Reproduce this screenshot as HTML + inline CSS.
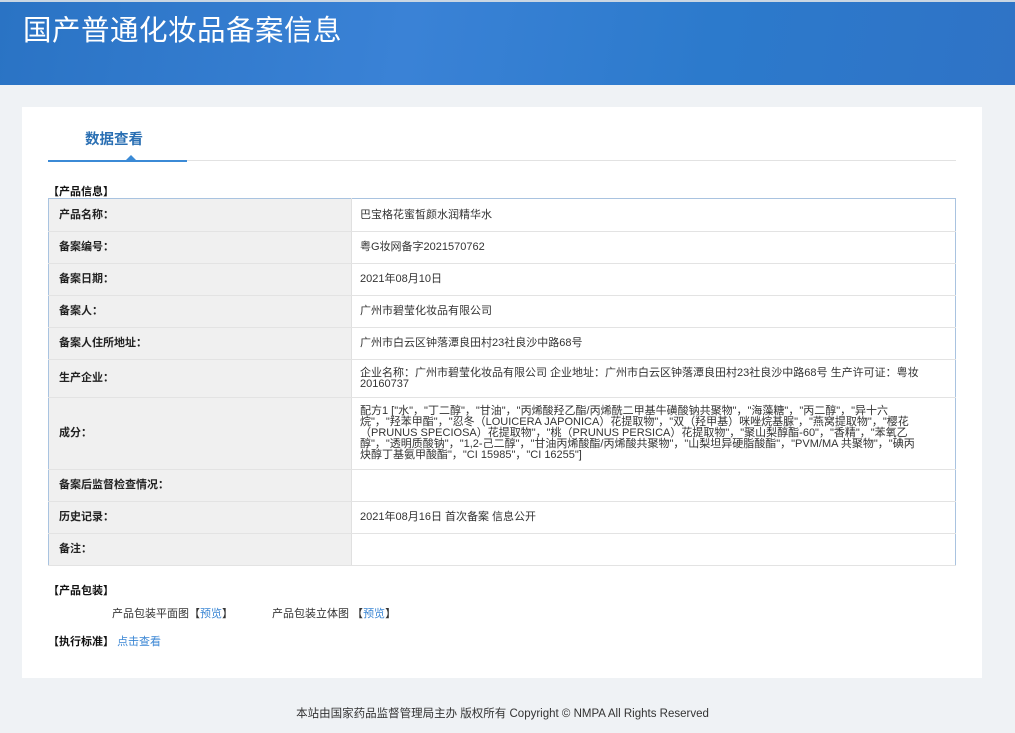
<!DOCTYPE html>
<html><head><meta charset="utf-8"><style>
*{margin:0;padding:0;box-sizing:border-box}
body{width:1015px;height:733px;background:#eff2f5;font-family:"Liberation Sans","Noto Sans CJK SC",sans-serif;font-size:11px;color:#333;position:relative;overflow:hidden}
.hd{position:absolute;left:0;top:0;width:1015px;height:85px;background:linear-gradient(100deg,#2a73c4 0%,#3a82d6 40%,#2c7acc 70%,#2f73c6 100%);border-top:2px solid #c9d6e3}
.hd h1{position:absolute;left:23px;top:6px;font-size:28.5px;font-weight:normal;color:#fff;letter-spacing:0.5px;font-family:"Noto Sans CJK SC",sans-serif}
.card{position:absolute;left:22px;top:107px;width:960px;height:571px;background:#fff}
.tab{position:absolute;left:63px;top:21px;font-size:14.5px;font-weight:bold;color:#2a6fb3}
.line{position:absolute;left:26px;top:53px;width:908px;height:1px;background:#e2e2e2}
.blue{position:absolute;left:26px;top:53px;width:139px;height:2px;background:#3b8ad6}
.tri{position:absolute;left:104px;top:48px;width:0;height:0;border-left:5px solid transparent;border-right:5px solid transparent;border-bottom:5px solid #3b8ad6}
.sec{position:absolute;font-weight:bold;color:#111}
table{position:absolute;left:26px;top:91px;width:908px;border-collapse:collapse;border:1px solid #a9c3e0}
td{border-bottom:1px solid #e3e3e3;vertical-align:middle;line-height:11px}
td.l{width:303px;background:#f0f0f0;font-weight:bold;padding-left:10px;border-right:1px solid #e0e0e0;color:#222}
td.r{padding-left:8px;padding-right:36px}
a{color:#3a86d4;text-decoration:none}
.ft{position:absolute;top:705px;left:0;width:1005px;text-align:center;color:#333;font-size:11.5px}
</style></head><body>
<div class="hd"><h1>国产普通化妆品备案信息</h1></div>
<div class="card">
<div class="tab">数据查看</div>
<div class="line"></div><div class="blue"></div><div class="tri"></div>
<div class="sec" style="left:26px;top:76px">【产品信息】</div>
<table>
<tr style="height:33px"><td class="l">产品名称：</td><td class="r">巴宝格花蜜皙颜水润精华水</td></tr>
<tr style="height:32px"><td class="l">备案编号：</td><td class="r">粤G妆网备字2021570762</td></tr>
<tr style="height:32px"><td class="l">备案日期：</td><td class="r">2021年08月10日</td></tr>
<tr style="height:32px"><td class="l">备案人：</td><td class="r">广州市碧莹化妆品有限公司</td></tr>
<tr style="height:32px"><td class="l">备案人住所地址：</td><td class="r">广州市白云区钟落潭良田村23社良沙中路68号</td></tr>
<tr style="height:38px"><td class="l">生产企业：</td><td class="r">企业名称：广州市碧莹化妆品有限公司 企业地址：广州市白云区钟落潭良田村23社良沙中路68号 生产许可证：粤妆20160737</td></tr>
<tr style="height:72px"><td class="l">成分：</td><td class="r">配方1 ["水"，"丁二醇"，"甘油"，"丙烯酸羟乙酯/丙烯酰二甲基牛磺酸钠共聚物"，"海藻糖"，"丙二醇"，"异十六烷"，"羟苯甲酯"，"忍冬（LOUICERA JAPONICA）花提取物"，"双（羟甲基）咪唑烷基脲"，"燕窝提取物"，"樱花（PRUNUS SPECIOSA）花提取物"，"桃（PRUNUS PERSICA）花提取物"，"聚山梨醇酯-60"，"香精"，"苯氧乙醇"，"透明质酸钠"，"1,2-己二醇"，"甘油丙烯酸酯/丙烯酸共聚物"，"山梨坦异硬脂酸酯"，"PVM/MA 共聚物"，"碘丙炔醇丁基氨甲酸酯"，"CI 15985"，"CI 16255"]</td></tr>
<tr style="height:32px"><td class="l">备案后监督检查情况：</td><td class="r"></td></tr>
<tr style="height:32px"><td class="l">历史记录：</td><td class="r">2021年08月16日 首次备案 信息公开</td></tr>
<tr style="height:32px"><td class="l">备注：</td><td class="r"></td></tr>
</table>
<div class="sec" style="left:26px;top:475px">【产品包装】</div>
<div style="position:absolute;left:90px;top:498px">产品包装平面图【<a>预览</a>】</div>
<div style="position:absolute;left:250px;top:498px">产品包装立体图 【<a>预览</a>】</div>
<div class="sec" style="left:26px;top:526px">【执行标准】 <a style="font-weight:normal">点击查看</a></div>
</div>
<div class="ft">本站由国家药品监督管理局主办 版权所有 Copyright © NMPA All Rights Reserved</div>
</body></html>
